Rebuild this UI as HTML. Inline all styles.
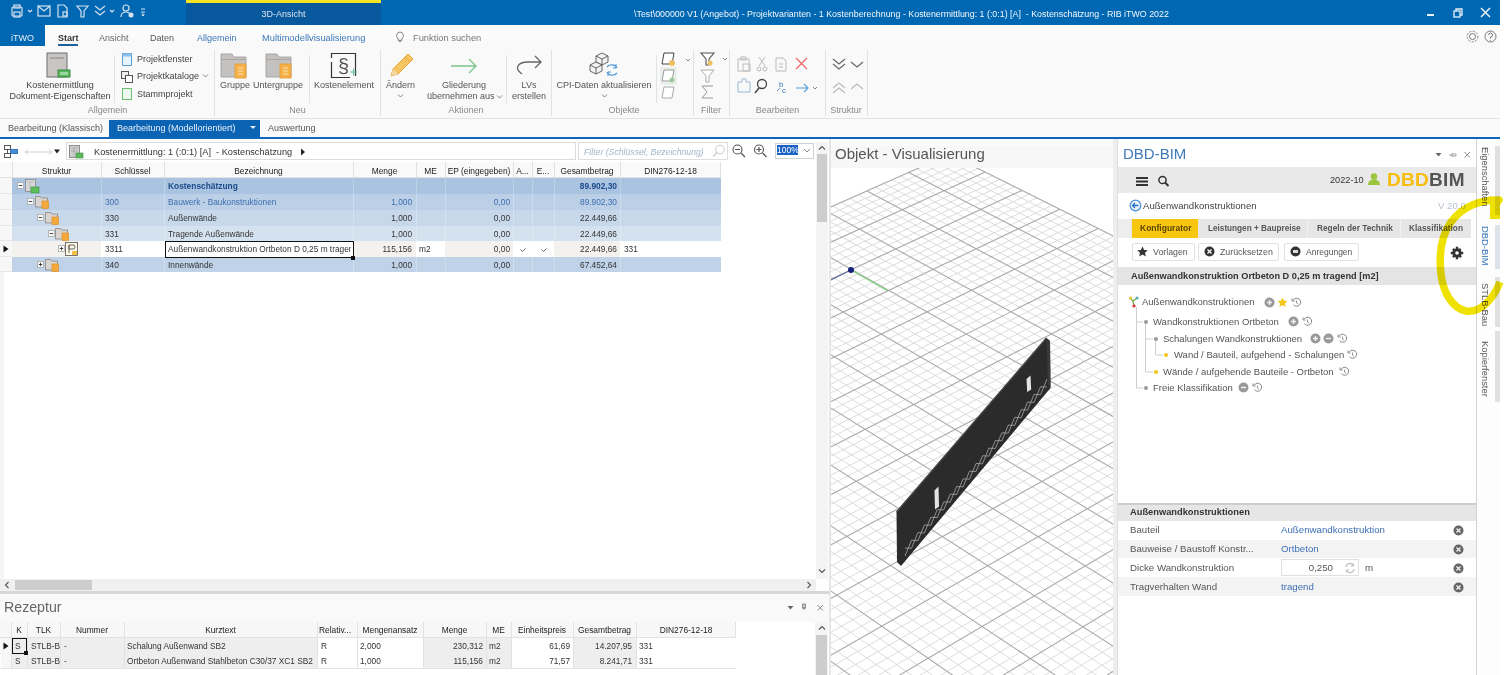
<!DOCTYPE html>
<html><head><meta charset="utf-8">
<style>
*{margin:0;padding:0;box-sizing:border-box}
html,body{width:1512px;height:675px;overflow:hidden;background:#fff;font-family:"Liberation Sans",sans-serif;color:#333}
.a{position:absolute}
.t{position:absolute;white-space:nowrap}
.c{text-align:center}
.r{text-align:right}
svg{position:absolute;overflow:visible}
</style></head><body>
<!-- TITLE BAR -->
<div class="a" style="left:0;top:0;width:1500px;height:25px;background:#0068b3"></div>
<div class="a" style="left:186px;top:0;width:195px;height:25px;background:#07589c"></div>
<div class="a" style="left:186px;top:0;width:195px;height:3px;background:#f4e422"></div>
<div class="t c" style="left:186px;top:8px;width:195px;font-size:9px;line-height:12px;color:#d9e4ee">3D-Ansicht</div>
<div class="t" style="left:634px;top:8px;font-size:8.85px;line-height:12px;color:#f2f6fa">\Test\000000 V1 (Angebot) - Projektvarianten - 1 Kostenberechnung - Kostenermittlung: 1 (:0:1) [A]&nbsp; - Kostenschätzung - RIB iTWO 2022</div>
<!-- quick access icons -->
<svg style="left:0;top:0" width="180" height="25">
 <g fill="none" stroke="#d6e2ef" stroke-width="1.2">
  <rect x="12" y="7" width="10" height="9" rx="1"/><rect x="14" y="5" width="6" height="3"/><rect x="14" y="12" width="6" height="5"/>
  <path d="M28 10 l2 2 l2 -2"/>
  <rect x="38" y="6" width="12" height="10"/><path d="M38 6 l6 5 l6 -5"/>
  <path d="M58 5 h6 l3 3 v9 h-9z"/><rect x="63" y="12" width="4" height="4"/>
  <path d="M77 6 h11 l-4 5 v6 h-3 v-6z"/>
  <path d="M95 6 l5 4 l5 -4 M95 11 l5 4 l5 -4"/><path d="M110 10 l2 2 l2 -2"/>
  <circle cx="126" cy="8" r="3"/><path d="M121 17 q0 -5 5 -5 q3 0 4 2"/>
 </g>
 <circle cx="131" cy="15" r="2.5" fill="#d6e2ef"/>
 <path d="M141 9 h4 M141 12 h4 M143 13 v3 l-1.5 -1.5 M143 16 l1.5 -1.5" stroke="#d6e2ef" stroke-width="1" fill="none"/>
</svg>
<!-- window controls -->
<div class="a" style="left:1427px;top:14px;width:7px;height:2px;background:#e8f0f8"></div>
<svg style="left:1452px;top:7px" width="14" height="12"><g fill="none" stroke="#e8f0f8" stroke-width="1.3"><rect x="2" y="4" width="6" height="6"/><path d="M4 4 v-2 h6 v6 h-2"/></g></svg>
<svg style="left:1480px;top:7px" width="12" height="12"><path d="M1 1 L10 10 M10 1 L1 10" stroke="#e8f0f8" stroke-width="1.5"/></svg>

<!-- RIBBON TABS -->
<div class="a" style="left:0;top:25px;width:1500px;height:94px;background:#f9f9f9"></div><div class="a" style="left:0;top:25px;width:1500px;height:14px;background:#fcfcfc"></div>
<div class="a" style="left:0;top:25px;width:45px;height:21px;background:#0068b3"></div>
<div class="t c" style="left:0;top:32px;width:45px;font-size:9px;line-height:12px;color:#e6eef6">iTWO</div>
<div class="t" style="left:58px;top:32px;font-size:9px;line-height:12px;color:#333;font-weight:bold">Start</div>
<div class="a" style="left:58px;top:44px;width:20px;height:2px;background:#1e5f9e"></div>
<div class="t" style="left:99px;top:32px;font-size:9px;line-height:12px;color:#666">Ansicht</div>
<div class="t" style="left:150px;top:32px;font-size:9px;line-height:12px;color:#555">Daten</div>
<div class="t" style="left:197px;top:32px;font-size:9px;line-height:12px;color:#3b78b8">Allgemein</div>
<div class="t" style="left:262px;top:32px;font-size:9.3px;line-height:12px;color:#3b78b8">Multimodellvisualisierung</div>
<svg style="left:395px;top:31px" width="10" height="12"><path d="M5 1 a3.5 3.5 0 0 1 2 6.3 v2 h-4 v-2 a3.5 3.5 0 0 1 2 -6.3z M4 10.5 h2" fill="none" stroke="#777" stroke-width="0.9"/></svg>
<div class="t" style="left:413px;top:32px;font-size:9.3px;line-height:12px;color:#777">Funktion suchen</div>
<svg style="left:1466px;top:30px" width="32" height="14"><g fill="none" stroke="#777" stroke-width="1"><circle cx="6.5" cy="6.5" r="3"/><circle cx="6.5" cy="6.5" r="5.3" stroke-dasharray="2 1.5"/><circle cx="24.5" cy="6.5" r="5.5"/><path d="M22.5 5 a2 2 0 1 1 2 2 v1.5 M24.5 10 v0.8"/></g></svg>


<!-- RIBBON BODY -->
<div class="a" style="left:0;top:118px;width:1500px;height:1px;background:#e4e4e4"></div>
<!-- group separators -->
<div class="a" style="left:114px;top:55px;width:1px;height:48px;background:#e2e2e2"></div>
<div class="a" style="left:214px;top:50px;width:1px;height:66px;background:#e2e2e2"></div>
<div class="a" style="left:309px;top:55px;width:1px;height:48px;background:#e2e2e2"></div>
<div class="a" style="left:380px;top:50px;width:1px;height:66px;background:#e2e2e2"></div>
<div class="a" style="left:506px;top:55px;width:1px;height:48px;background:#e2e2e2"></div>
<div class="a" style="left:551px;top:50px;width:1px;height:66px;background:#e2e2e2"></div>
<div class="a" style="left:656px;top:55px;width:1px;height:48px;background:#e2e2e2"></div>
<div class="a" style="left:693px;top:50px;width:1px;height:66px;background:#e2e2e2"></div>
<div class="a" style="left:729px;top:50px;width:1px;height:66px;background:#e2e2e2"></div>
<div class="a" style="left:825px;top:50px;width:1px;height:66px;background:#e2e2e2"></div>
<div class="a" style="left:867px;top:50px;width:1px;height:66px;background:#e2e2e2"></div>
<!-- Allgemein group -->
<svg style="left:46px;top:52px" width="28" height="28">
 <rect x="1" y="1" width="20" height="24" fill="#c9c5c2" stroke="#6e6e6e" stroke-width="1"/>
 <path d="M4 6 h14" stroke="#888" stroke-width="1"/>
 <rect x="12" y="18" width="12" height="7" fill="#58b85e" stroke="#3a8a40" stroke-width="1"/>
 <rect x="14" y="20" width="8" height="3" fill="#9ad49e"/>
</svg>
<div class="t c" style="left:0;top:80px;width:120px;font-size:9px;line-height:11px;color:#444">Kostenermittlung<br>Dokument-Eigenschaften</div>
<div class="t c" style="left:60px;top:105px;width:95px;font-size:9px;line-height:11px;color:#888">Allgemein</div>
<svg style="left:121px;top:52px" width="14" height="48">
 <rect x="1.5" y="1.5" width="9" height="12" fill="#e9f3fb" stroke="#5aa0d8" stroke-width="1"/><rect x="1.5" y="1.5" width="9" height="3" fill="#8cc0ea"/>
 <rect x="0.5" y="19.5" width="7" height="7" fill="#eee" stroke="#555" stroke-width="1"/><rect x="4.5" y="23.5" width="7" height="7" fill="#fff" stroke="#555" stroke-width="1"/>
 <rect x="1.5" y="36.5" width="9" height="11" fill="#eef8ee" stroke="#6cc070" stroke-width="1"/>
</svg>
<div class="t" style="left:137px;top:53px;font-size:9px;line-height:12px;color:#444">Projektfenster</div>
<div class="t" style="left:137px;top:70px;font-size:9px;line-height:12px;color:#444">Projektkataloge</div>
<svg style="left:202px;top:73px" width="8" height="6"><path d="M1 1.5 l2.5 2.5 l2.5 -2.5" fill="none" stroke="#777" stroke-width="0.9"/></svg>
<div class="t" style="left:137px;top:88px;font-size:9px;line-height:12px;color:#444">Stammprojekt</div>
<!-- Neu group -->
<svg style="left:220px;top:53px" width="30" height="26">
 <path d="M1 1 h11 l2 3 h12 v20 h-25z" fill="#c4c2c0" stroke="#9a9a9a" stroke-width="0.8"/>
 <rect x="1" y="6" width="25" height="1" fill="#a9a6a4"/>
 <rect x="15" y="11" width="11" height="14" fill="#f5b14a" stroke="#e09a2e" stroke-width="0.8"/>
 <path d="M18 15 h5 M18 18 h5 M18 21 h5" stroke="#fde2b0" stroke-width="1"/>
</svg>
<svg style="left:265px;top:53px" width="30" height="26">
 <path d="M1 1 h11 l2 3 h12 v20 h-25z" fill="#c4c2c0" stroke="#9a9a9a" stroke-width="0.8"/>
 <rect x="1" y="6" width="25" height="1" fill="#a9a6a4"/>
 <rect x="15" y="11" width="11" height="14" fill="#f5b14a" stroke="#e09a2e" stroke-width="0.8"/>
 <path d="M18 15 h5 M18 18 h5 M18 21 h5" stroke="#fde2b0" stroke-width="1"/>
</svg>
<div class="t" style="left:220px;top:80px;font-size:9px;line-height:11px;color:#555">Gruppe</div>
<div class="t" style="left:253px;top:80px;font-size:9px;line-height:11px;color:#555">Untergruppe</div>
<svg style="left:330px;top:52px" width="30" height="28">
 <path d="M1.5 6 V1.5 H25.5 V24 M20 25.5 H1.5 V10" fill="none" stroke="#333" stroke-width="1.2"/>
 <text x="13.5" y="21" font-size="20" font-family="Liberation Sans" fill="#555" text-anchor="middle">§</text>
 <path d="M20 20 h7 M23.5 16.5 v7" stroke="#5cc28e" stroke-width="1"/>
</svg>
<div class="t" style="left:314px;top:80px;font-size:9px;line-height:11px;color:#555">Kostenelement</div>
<div class="t c" style="left:250px;top:105px;width:95px;font-size:9px;line-height:11px;color:#888">Neu</div>
<!-- Aendern -->
<svg style="left:387px;top:52px" width="30" height="28">
 <path d="M4 24 l2 -7 l15 -15 l5 5 l-15 15 z" fill="#f6c461" stroke="#e8a23a" stroke-width="1"/>
 <path d="M4 24 l2 -7 l5 5z" fill="#f3d9a8"/>
 <path d="M18 5 l5 5" stroke="#e8a23a" stroke-width="1"/>
</svg>
<div class="t" style="left:386px;top:80px;font-size:9px;line-height:11px;color:#555">Ändern</div>
<svg style="left:397px;top:93px" width="8" height="6"><path d="M1 1.5 l2.5 2.5 l2.5 -2.5" fill="none" stroke="#777" stroke-width="0.9"/></svg>
<!-- Aktionen -->
<svg style="left:449px;top:57px" width="30" height="18"><path d="M2 9 h25 M20 2 l7 7 l-7 7" fill="none" stroke="#7cc48a" stroke-width="1.3"/></svg>
<div class="t c" style="left:420px;top:80px;width:88px;font-size:9px;line-height:11px;color:#555">Gliederung</div><div class="t" style="left:427px;top:91px;font-size:9px;line-height:11px;color:#555">übernehmen aus</div>
<svg style="left:496px;top:94px" width="8" height="6"><path d="M1 1.5 l2.5 2.5 l2.5 -2.5" fill="none" stroke="#777" stroke-width="0.9"/></svg>
<svg style="left:514px;top:55px" width="30" height="22"><path d="M8 19 q-6 -4 -4 -8 q2 -4 10 -4 h13 M21 1 l6 6 l-6 6" fill="none" stroke="#666" stroke-width="1.3"/></svg>
<div class="t c" style="left:508px;top:80px;width:42px;font-size:9px;line-height:11px;color:#555">LVs<br>erstellen</div>
<div class="t c" style="left:420px;top:105px;width:92px;font-size:9px;line-height:11px;color:#888">Aktionen</div>
<!-- Objekte -->
<svg style="left:590px;top:52px" width="32" height="28">
 <g fill="#f4f4f4" stroke="#555" stroke-width="0.9">
  <path d="M12 1 l6 3 v6 l-6 3 l-6 -3 v-6z"/><path d="M6 4 l6 3 l6 -3 M12 7 v6"/>
  <path d="M6 10 l6 3 v6 l-6 3 l-6 -3 v-6z"/><path d="M0 13 l6 3 l6 -3 M6 16 v6"/>
 </g>
 <path d="M17 15 a6 6 0 0 1 10 1 M27 21 a6 6 0 0 1 -10 -1" fill="none" stroke="#4a96d8" stroke-width="1.2"/>
 <path d="M26 12 v4 h-3 M18 24 v-4 h3" fill="none" stroke="#4a96d8" stroke-width="1"/>
</svg>
<div class="t c" style="left:552px;top:80px;width:104px;font-size:9px;line-height:11px;color:#555">CPI-Daten aktualisieren</div>
<svg style="left:601px;top:93px" width="8" height="6"><path d="M1 1.5 l2.5 2.5 l2.5 -2.5" fill="none" stroke="#777" stroke-width="0.9"/></svg>
<svg style="left:661px;top:51px" width="30" height="50">
 <path d="M3 2 h10 l-2 11 h-10z" fill="#fff" stroke="#444" stroke-width="1"/><circle cx="11" cy="12" r="3" fill="#f0c060"/>
 <path d="M25 8 l2 2 l2 -2" fill="none" stroke="#777" stroke-width="0.9"/>
 <rect x="0" y="17" width="15" height="16" fill="#f0f4f0" stroke="#d6e6d6" stroke-width="0.8"/>
 <path d="M3 19 h10 l-2 11 h-10z" fill="#fff" stroke="#999" stroke-width="1"/><circle cx="11" cy="29" r="2.5" fill="#9dc9a3"/>
 <path d="M3 36 h10 l-2 11 h-10z" fill="#fff" stroke="#aaa" stroke-width="1"/>
</svg>
<div class="t c" style="left:552px;top:105px;width:144px;font-size:9px;line-height:11px;color:#888">Objekte</div>
<!-- Filter -->
<svg style="left:699px;top:51px" width="30" height="50">
 <path d="M2 2 h13 l-5 6 v6 h-3 v-6z" fill="#fff" stroke="#555" stroke-width="1.1"/><circle cx="11" cy="12" r="2.5" fill="#f0c060"/>
 <path d="M24 7 l2 2 l2 -2" fill="none" stroke="#777" stroke-width="0.9"/>
 <path d="M2 19 h13 l-5 6 v6 h-3 v-6z" fill="#fff" stroke="#aaa" stroke-width="1"/>
 <path d="M14 35 h-11 l5 6 l-5 6 h11" fill="none" stroke="#999" stroke-width="1"/>
</svg>
<div class="t c" style="left:690px;top:105px;width:42px;font-size:9px;line-height:11px;color:#888">Filter</div>
<!-- Bearbeiten -->
<svg style="left:735px;top:55px" width="90" height="42">
 <g fill="none" stroke="#bbb" stroke-width="1">
  <rect x="3" y="4" width="11" height="12"/><rect x="6" y="2" width="5" height="3"/><rect x="8" y="9" width="7" height="7"/>
  <path d="M24 2 l6 9 M30 2 l-6 9"/><circle cx="24" cy="14" r="2"/><circle cx="30" cy="14" r="2"/>
  <path d="M41 3 h7 l3 3 v10 h-10z M44 9 h4 M44 12 h4"/>
 </g>
 <path d="M61 3 l11 11 M72 3 l-11 11" stroke="#e66" stroke-width="1.2"/>
 <g fill="none" stroke="#9cb8d0" stroke-width="1"><path d="M3 27 h4 v-3 h4 v3 h4 v10 h-12z"/></g>
 <circle cx="27" cy="29" r="4.5" fill="none" stroke="#444" stroke-width="1.3"/><path d="M24 33 l-4 5" stroke="#444" stroke-width="1.5"/>
 <text x="44" y="32" font-size="8" fill="#3b7cbf" font-family="Liberation Sans">b</text><text x="47" y="38" font-size="8" fill="#3b7cbf" font-family="Liberation Sans">c</text>
 <path d="M42 36 l3 -3" stroke="#3b7cbf" stroke-width="0.8"/>
 <path d="M61 33 h12 M69 29 l4 4 l-4 4" fill="none" stroke="#5a9ede" stroke-width="1.2"/>
 <path d="M78 32 l2 2 l2 -2" fill="none" stroke="#777" stroke-width="0.9"/>
</svg>
<div class="t c" style="left:730px;top:105px;width:95px;font-size:9px;line-height:11px;color:#888">Bearbeiten</div>
<!-- Struktur -->
<svg style="left:830px;top:56px" width="36" height="40">
 <path d="M3 3 l6 5 l6 -5 M3 8 l6 5 l6 -5" fill="none" stroke="#666" stroke-width="1.2"/>
 <path d="M21 6 l6 5 l6 -5" fill="none" stroke="#666" stroke-width="1.2"/>
 <path d="M3 32 l6 -5 l6 5 M3 37 l6 -5 l6 5" fill="none" stroke="#bbb" stroke-width="1.2"/>
 <path d="M21 33 l6 -5 l6 5" fill="none" stroke="#bbb" stroke-width="1.2"/>
</svg>
<div class="t c" style="left:825px;top:105px;width:42px;font-size:9px;line-height:11px;color:#888">Struktur</div>

<!-- SUBTABS -->
<div class="a" style="left:0;top:119px;width:1500px;height:18px;background:#f9f9f9"></div>
<div class="t" style="left:8px;top:123px;font-size:9px;line-height:11px;color:#555">Bearbeitung (Klassisch)</div>
<div class="a" style="left:109px;top:120px;width:151px;height:17px;background:#0b63b3"></div>
<div class="t" style="left:117px;top:123px;font-size:9px;line-height:11px;color:#e8f0f8">Bearbeitung (Modellorientiert)</div>
<svg style="left:250px;top:126px" width="6" height="4"><path d="M0 0 h6 l-3 3z" fill="#e8f0f8"/></svg>
<div class="t" style="left:268px;top:123px;font-size:9px;line-height:11px;color:#555">Auswertung</div>
<div class="a" style="left:0;top:137px;width:1500px;height:2px;background:#0d67b8"></div>

<!-- MAIN GRID -->
<svg style="left:4px;top:145px" width="60" height="14">
 <g fill="none" stroke="#555" stroke-width="1"><rect x="0.5" y="0.5" width="6" height="4"/><rect x="0.5" y="8.5" width="6" height="4"/><path d="M3.5 4.5 v4"/></g>
 <rect x="6" y="4" width="8" height="5" fill="#4a90d9"/><rect x="6.5" y="4.5" width="7" height="4" fill="none" stroke="#2f6fb5" stroke-width="0.8"/>
 <path d="M21 7 h27 M24 4.5 l-3 2.5 l3 2.5 M45 4.5 l3 2.5 l-3 2.5" fill="none" stroke="#ccc" stroke-width="0.9"/>
 <path d="M50 4.5 h6 l-3 4z" fill="#222"/>
</svg>
<div class="a" style="left:66px;top:142px;width:510px;height:18px;border:1px solid #dcdcdc;background:#fff"></div>
<svg style="left:69px;top:145px" width="16" height="14">
 <rect x="0.5" y="0.5" width="10" height="12" fill="#cfcfcf" stroke="#777" stroke-width="0.8"/><path d="M2 3 h7 M2 6 h7 M5 3 v9" stroke="#999" stroke-width="0.6"/>
 <rect x="7" y="8" width="7" height="5" fill="#5cb85c" stroke="#3f8f3f" stroke-width="0.6"/>
</svg>
<div class="t" style="left:94px;top:146px;font-size:9.2px;line-height:12px;color:#333">Kostenermittlung: 1 (:0:1) [A]&nbsp; - Kostenschätzung</div>
<svg style="left:300px;top:148px" width="6" height="8"><path d="M1 0.5 l4 3.5 l-4 3.5z" fill="#222"/></svg>
<div class="a" style="left:578px;top:142px;width:150px;height:18px;border:1px solid #dedede;background:#fff"></div>
<div class="t" style="left:584px;top:146px;font-size:8.7px;line-height:12px;color:#a4b6cb;font-style:italic">Filter (Schlüssel, Bezeichnung)</div>
<svg style="left:712px;top:144px" width="14" height="14"><circle cx="8" cy="5.5" r="4.3" fill="none" stroke="#c9c9c9" stroke-width="1"/><path d="M5 8.5 l-4 4" stroke="#c9c9c9" stroke-width="1.2"/></svg>
<svg style="left:732px;top:144px" width="40" height="16">
 <circle cx="5.5" cy="5.5" r="4.5" fill="none" stroke="#555" stroke-width="1.1"/><path d="M3 5.5 h5 M9 9 l4 4" stroke="#555" stroke-width="1.2"/>
 <circle cx="27" cy="5.5" r="4.5" fill="none" stroke="#555" stroke-width="1.1"/><path d="M24.5 5.5 h5 M27 3 v5 M30.5 9 l4 4" stroke="#555" stroke-width="1.2"/>
</svg>
<div class="a" style="left:775px;top:143px;width:39px;height:16px;border:1px solid #d0d0d0;background:#fff"></div>
<div class="a" style="left:777px;top:145px;width:21px;height:10px;background:#1b62c4"></div>
<div class="t" style="left:777px;top:144px;font-size:8.5px;line-height:12px;color:#fff">100%</div>
<svg style="left:803px;top:148px" width="8" height="6"><path d="M1 1 l3 3 l3 -3" fill="none" stroke="#888" stroke-width="1"/></svg>

<div class="a" style="left:0;top:162px;width:721px;height:16px;background:#f9f9f9;border-bottom:1px solid #e2e2e2"></div>
<div class="a" style="left:12px;top:162px;width:1px;height:16px;background:#e0e0e0"></div>
<div class="t c" style="left:12px;top:164.5px;width:89px;font-size:8.4px;line-height:12px;color:#222">Struktur</div>
<div class="a" style="left:101px;top:162px;width:1px;height:16px;background:#e0e0e0"></div>
<div class="t c" style="left:101px;top:164.5px;width:63px;font-size:8.4px;line-height:12px;color:#222">Schlüssel</div>
<div class="a" style="left:164px;top:162px;width:1px;height:16px;background:#e0e0e0"></div>
<div class="t c" style="left:164px;top:164.5px;width:189px;font-size:8.4px;line-height:12px;color:#222">Bezeichnung</div>
<div class="a" style="left:353px;top:162px;width:1px;height:16px;background:#e0e0e0"></div>
<div class="t c" style="left:353px;top:164.5px;width:63px;font-size:8.4px;line-height:12px;color:#222">Menge</div>
<div class="a" style="left:416px;top:162px;width:1px;height:16px;background:#e0e0e0"></div>
<div class="t c" style="left:416px;top:164.5px;width:29px;font-size:8.4px;line-height:12px;color:#222">ME</div>
<div class="a" style="left:445px;top:162px;width:1px;height:16px;background:#e0e0e0"></div>
<div class="t c" style="left:445px;top:164.5px;width:68px;font-size:8.4px;line-height:12px;color:#222">EP (eingegeben)</div>
<div class="a" style="left:513px;top:162px;width:1px;height:16px;background:#e0e0e0"></div>
<div class="t c" style="left:513px;top:164.5px;width:19px;font-size:8.4px;line-height:12px;color:#222">A...</div>
<div class="a" style="left:532px;top:162px;width:1px;height:16px;background:#e0e0e0"></div>
<div class="t c" style="left:532px;top:164.5px;width:22px;font-size:8.4px;line-height:12px;color:#222">E...</div>
<div class="a" style="left:554px;top:162px;width:1px;height:16px;background:#e0e0e0"></div>
<div class="t c" style="left:554px;top:164.5px;width:66px;font-size:8.4px;line-height:12px;color:#222">Gesamtbetrag</div>
<div class="a" style="left:620px;top:162px;width:1px;height:16px;background:#e0e0e0"></div>
<div class="t c" style="left:620px;top:164.5px;width:101px;font-size:8.4px;line-height:12px;color:#222">DIN276-12-18</div>
<div class="a" style="left:720px;top:162px;width:1px;height:16px;background:#e0e0e0"></div>
<div class="a" style="left:0;top:178px;width:12px;height:16px;background:#f7f7f7;border-bottom:1px solid #e8e8e8"></div>
<div class="a" style="left:12px;top:178px;width:709px;height:16px;background:#a9c3e0"></div>
<div class="a" style="left:101px;top:178px;width:1px;height:16px;background:rgba(255,255,255,0.25)"></div>
<div class="a" style="left:164px;top:178px;width:1px;height:16px;background:rgba(255,255,255,0.25)"></div>
<div class="a" style="left:353px;top:178px;width:1px;height:16px;background:rgba(255,255,255,0.25)"></div>
<div class="a" style="left:416px;top:178px;width:1px;height:16px;background:rgba(255,255,255,0.25)"></div>
<div class="a" style="left:445px;top:178px;width:1px;height:16px;background:rgba(255,255,255,0.25)"></div>
<div class="a" style="left:513px;top:178px;width:1px;height:16px;background:rgba(255,255,255,0.25)"></div>
<div class="a" style="left:532px;top:178px;width:1px;height:16px;background:rgba(255,255,255,0.25)"></div>
<div class="a" style="left:554px;top:178px;width:1px;height:16px;background:rgba(255,255,255,0.25)"></div>
<div class="a" style="left:620px;top:178px;width:1px;height:16px;background:rgba(255,255,255,0.25)"></div>
<div class="a" style="left:0;top:194px;width:12px;height:16px;background:#f7f7f7;border-bottom:1px solid #e8e8e8"></div>
<div class="a" style="left:12px;top:194px;width:709px;height:16px;background:#bbcfe6"></div>
<div class="a" style="left:101px;top:194px;width:1px;height:16px;background:rgba(255,255,255,0.25)"></div>
<div class="a" style="left:164px;top:194px;width:1px;height:16px;background:rgba(255,255,255,0.25)"></div>
<div class="a" style="left:353px;top:194px;width:1px;height:16px;background:rgba(255,255,255,0.25)"></div>
<div class="a" style="left:416px;top:194px;width:1px;height:16px;background:rgba(255,255,255,0.25)"></div>
<div class="a" style="left:445px;top:194px;width:1px;height:16px;background:rgba(255,255,255,0.25)"></div>
<div class="a" style="left:513px;top:194px;width:1px;height:16px;background:rgba(255,255,255,0.25)"></div>
<div class="a" style="left:532px;top:194px;width:1px;height:16px;background:rgba(255,255,255,0.25)"></div>
<div class="a" style="left:554px;top:194px;width:1px;height:16px;background:rgba(255,255,255,0.25)"></div>
<div class="a" style="left:620px;top:194px;width:1px;height:16px;background:rgba(255,255,255,0.25)"></div>
<div class="a" style="left:0;top:210px;width:12px;height:16px;background:#f7f7f7;border-bottom:1px solid #e8e8e8"></div>
<div class="a" style="left:12px;top:210px;width:709px;height:16px;background:#c7d8eb"></div>
<div class="a" style="left:101px;top:210px;width:1px;height:16px;background:rgba(255,255,255,0.25)"></div>
<div class="a" style="left:164px;top:210px;width:1px;height:16px;background:rgba(255,255,255,0.25)"></div>
<div class="a" style="left:353px;top:210px;width:1px;height:16px;background:rgba(255,255,255,0.25)"></div>
<div class="a" style="left:416px;top:210px;width:1px;height:16px;background:rgba(255,255,255,0.25)"></div>
<div class="a" style="left:445px;top:210px;width:1px;height:16px;background:rgba(255,255,255,0.25)"></div>
<div class="a" style="left:513px;top:210px;width:1px;height:16px;background:rgba(255,255,255,0.25)"></div>
<div class="a" style="left:532px;top:210px;width:1px;height:16px;background:rgba(255,255,255,0.25)"></div>
<div class="a" style="left:554px;top:210px;width:1px;height:16px;background:rgba(255,255,255,0.25)"></div>
<div class="a" style="left:620px;top:210px;width:1px;height:16px;background:rgba(255,255,255,0.25)"></div>
<div class="a" style="left:0;top:226px;width:12px;height:15px;background:#f7f7f7;border-bottom:1px solid #e8e8e8"></div>
<div class="a" style="left:12px;top:226px;width:709px;height:15px;background:#d4e2f0"></div>
<div class="a" style="left:101px;top:226px;width:1px;height:15px;background:rgba(255,255,255,0.25)"></div>
<div class="a" style="left:164px;top:226px;width:1px;height:15px;background:rgba(255,255,255,0.25)"></div>
<div class="a" style="left:353px;top:226px;width:1px;height:15px;background:rgba(255,255,255,0.25)"></div>
<div class="a" style="left:416px;top:226px;width:1px;height:15px;background:rgba(255,255,255,0.25)"></div>
<div class="a" style="left:445px;top:226px;width:1px;height:15px;background:rgba(255,255,255,0.25)"></div>
<div class="a" style="left:513px;top:226px;width:1px;height:15px;background:rgba(255,255,255,0.25)"></div>
<div class="a" style="left:532px;top:226px;width:1px;height:15px;background:rgba(255,255,255,0.25)"></div>
<div class="a" style="left:554px;top:226px;width:1px;height:15px;background:rgba(255,255,255,0.25)"></div>
<div class="a" style="left:620px;top:226px;width:1px;height:15px;background:rgba(255,255,255,0.25)"></div>
<div class="a" style="left:0;top:241px;width:12px;height:16px;background:#f7f7f7;border-bottom:1px solid #e8e8e8"></div>
<div class="a" style="left:0;top:257px;width:12px;height:15px;background:#f7f7f7;border-bottom:1px solid #e8e8e8"></div>
<div class="a" style="left:12px;top:257px;width:709px;height:15px;background:#bfd2e8"></div>
<div class="a" style="left:101px;top:257px;width:1px;height:15px;background:rgba(255,255,255,0.25)"></div>
<div class="a" style="left:164px;top:257px;width:1px;height:15px;background:rgba(255,255,255,0.25)"></div>
<div class="a" style="left:353px;top:257px;width:1px;height:15px;background:rgba(255,255,255,0.25)"></div>
<div class="a" style="left:416px;top:257px;width:1px;height:15px;background:rgba(255,255,255,0.25)"></div>
<div class="a" style="left:445px;top:257px;width:1px;height:15px;background:rgba(255,255,255,0.25)"></div>
<div class="a" style="left:513px;top:257px;width:1px;height:15px;background:rgba(255,255,255,0.25)"></div>
<div class="a" style="left:532px;top:257px;width:1px;height:15px;background:rgba(255,255,255,0.25)"></div>
<div class="a" style="left:554px;top:257px;width:1px;height:15px;background:rgba(255,255,255,0.25)"></div>
<div class="a" style="left:620px;top:257px;width:1px;height:15px;background:rgba(255,255,255,0.25)"></div>
<div class="a" style="left:12px;top:241px;width:89px;height:16px;background:#f4f2ef"></div>
<div class="a" style="left:101px;top:241px;width:63px;height:16px;background:#fff"></div>
<div class="a" style="left:164px;top:241px;width:189px;height:16px;background:#fff"></div>
<div class="a" style="left:353px;top:241px;width:63px;height:16px;background:#f4f2ef"></div>
<div class="a" style="left:416px;top:241px;width:29px;height:16px;background:#fff"></div>
<div class="a" style="left:445px;top:241px;width:68px;height:16px;background:#f4f2ef"></div>
<div class="a" style="left:513px;top:241px;width:19px;height:16px;background:#fff"></div>
<div class="a" style="left:532px;top:241px;width:22px;height:16px;background:#fff"></div>
<div class="a" style="left:554px;top:241px;width:66px;height:16px;background:#f4f2ef"></div>
<div class="a" style="left:620px;top:241px;width:101px;height:16px;background:#fff"></div>
<div class="a" style="left:165px;top:241px;width:189px;height:17px;border:1.6px solid #111"></div>
<div class="a" style="left:351px;top:256px;width:4px;height:4px;background:#111"></div>
<svg style="left:3px;top:245px" width="6" height="8"><path d="M0.5 0.5 l5 3.5 l-5 3.5z" fill="#111"/></svg>
<svg style="left:17px;top:182px" width="7" height="7"><rect x="0.5" y="0.5" width="6" height="6" fill="#fafafa" stroke="#aaa" stroke-width="0.8"/><path d="M1.8 3.5 h3.4" stroke="#333" stroke-width="0.9"/></svg>
<svg style="left:25px;top:179px" width="15" height="15"><rect x="0.5" y="0.5" width="10" height="12" fill="#d7d7d7" stroke="#888" stroke-width="0.8"/><path d="M2 3 h7 M5 3 v9" stroke="#aaa" stroke-width="0.6"/><rect x="6" y="8" width="8" height="6" fill="#5cbf5c" stroke="#3f8f3f" stroke-width="0.6"/></svg>
<svg style="left:27px;top:198px" width="7" height="7"><rect x="0.5" y="0.5" width="6" height="6" fill="#fafafa" stroke="#aaa" stroke-width="0.8"/><path d="M1.8 3.5 h3.4" stroke="#333" stroke-width="0.9"/></svg>
<svg style="left:35px;top:195px" width="15" height="14"><path d="M0.5 1.5 h5 l1 1.5 h6 v9 h-12z" fill="#d9d4cf" stroke="#8a8580" stroke-width="0.8"/><rect x="7" y="6" width="6.5" height="7.5" fill="#f5a93c" stroke="#d98a1c" stroke-width="0.6"/></svg>
<svg style="left:37px;top:214px" width="7" height="7"><rect x="0.5" y="0.5" width="6" height="6" fill="#fafafa" stroke="#aaa" stroke-width="0.8"/><path d="M1.8 3.5 h3.4" stroke="#333" stroke-width="0.9"/></svg>
<svg style="left:45px;top:211px" width="15" height="14"><path d="M0.5 1.5 h5 l1 1.5 h6 v9 h-12z" fill="#d9d4cf" stroke="#8a8580" stroke-width="0.8"/><rect x="7" y="6" width="6.5" height="7.5" fill="#f5a93c" stroke="#d98a1c" stroke-width="0.6"/></svg>
<svg style="left:48px;top:230px" width="7" height="7"><rect x="0.5" y="0.5" width="6" height="6" fill="#fafafa" stroke="#aaa" stroke-width="0.8"/><path d="M1.8 3.5 h3.4" stroke="#333" stroke-width="0.9"/></svg>
<svg style="left:55px;top:227px" width="15" height="14"><path d="M0.5 1.5 h5 l1 1.5 h6 v9 h-12z" fill="#d9d4cf" stroke="#8a8580" stroke-width="0.8"/><rect x="7" y="6" width="6.5" height="7.5" fill="#f5a93c" stroke="#d98a1c" stroke-width="0.6"/></svg>
<svg style="left:58px;top:245px" width="7" height="7"><rect x="0.5" y="0.5" width="6" height="6" fill="#fafafa" stroke="#aaa" stroke-width="0.8"/><path d="M1.8 3.5 h3.4 M3.5 1.8 v3.4" stroke="#333" stroke-width="0.9"/></svg>
<svg style="left:65px;top:242px" width="14" height="15"><rect x="0.5" y="0.5" width="12" height="13" fill="#fff8e6" stroke="#555" stroke-width="0.8"/><path d="M4 3 h4 q2 0 2 2 q0 2 -2 2 h-4 z M4 3 v8" fill="none" stroke="#555" stroke-width="0.9"/><rect x="7" y="9" width="5" height="4" fill="#f5c04a"/></svg>
<svg style="left:37px;top:261px" width="7" height="7"><rect x="0.5" y="0.5" width="6" height="6" fill="#fafafa" stroke="#aaa" stroke-width="0.8"/><path d="M1.8 3.5 h3.4 M3.5 1.8 v3.4" stroke="#333" stroke-width="0.9"/></svg>
<svg style="left:45px;top:258px" width="15" height="14"><path d="M0.5 1.5 h5 l1 1.5 h6 v9 h-12z" fill="#d9d4cf" stroke="#8a8580" stroke-width="0.8"/><rect x="7" y="6" width="6.5" height="7.5" fill="#f5a93c" stroke="#d98a1c" stroke-width="0.6"/></svg>
<div class="t" style="left:168px;top:180px;font-size:8.4px;line-height:12px;color:#1d4a8a;font-weight:bold;">Kostenschätzung</div>
<div class="t r" style="left:557px;width:60px;top:180px;font-size:8.4px;line-height:12px;color:#1d4a8a;font-weight:bold;">89.902,30</div>
<div class="t" style="left:105px;top:196px;font-size:8.3px;line-height:12px;color:#3d6eb0;">300</div>
<div class="t" style="left:168px;top:196px;font-size:8.3px;line-height:12px;color:#3d6eb0;">Bauwerk - Baukonstruktionen</div>
<div class="t r" style="left:357px;width:55px;top:196px;font-size:8.3px;line-height:12px;color:#3d6eb0;">1,000</div>
<div class="t r" style="left:450px;width:60px;top:196px;font-size:8.3px;line-height:12px;color:#3d6eb0;">0,00</div>
<div class="t r" style="left:557px;width:60px;top:196px;font-size:8.3px;line-height:12px;color:#3d6eb0;">89.902,30</div>
<div class="t" style="left:105px;top:212px;font-size:8.3px;line-height:12px;color:#333;">330</div>
<div class="t" style="left:168px;top:212px;font-size:8.3px;line-height:12px;color:#333;">Außenwände</div>
<div class="t r" style="left:357px;width:55px;top:212px;font-size:8.3px;line-height:12px;color:#333;">1,000</div>
<div class="t r" style="left:450px;width:60px;top:212px;font-size:8.3px;line-height:12px;color:#333;">0,00</div>
<div class="t r" style="left:557px;width:60px;top:212px;font-size:8.3px;line-height:12px;color:#333;">22.449,66</div>
<div class="t" style="left:105px;top:228px;font-size:8.3px;line-height:12px;color:#333;">331</div>
<div class="t" style="left:168px;top:228px;font-size:8.3px;line-height:12px;color:#333;">Tragende Außenwände</div>
<div class="t r" style="left:357px;width:55px;top:228px;font-size:8.3px;line-height:12px;color:#333;">1,000</div>
<div class="t r" style="left:450px;width:60px;top:228px;font-size:8.3px;line-height:12px;color:#333;">0,00</div>
<div class="t r" style="left:557px;width:60px;top:228px;font-size:8.3px;line-height:12px;color:#333;">22.449,66</div>
<div class="t" style="left:105px;top:243px;font-size:8.3px;line-height:12px;color:#333;">3311</div>
<div class="t" style="left:168px;top:243px;font-size:8.3px;line-height:12px;color:#333;"><span style="display:inline-block;width:183px;overflow:hidden">Außenwandkonstruktion Ortbeton D 0,25 m tragend</span></div>
<div class="t r" style="left:357px;width:55px;top:243px;font-size:8.3px;line-height:12px;color:#333;">115,156</div>
<div class="t" style="left:419px;top:243px;font-size:8.3px;line-height:12px;color:#333;">m2</div>
<div class="t r" style="left:450px;width:60px;top:243px;font-size:8.3px;line-height:12px;color:#333;">0,00</div>
<div class="t r" style="left:557px;width:60px;top:243px;font-size:8.3px;line-height:12px;color:#333;">22.449,66</div>
<div class="t" style="left:624px;top:243px;font-size:8.3px;line-height:12px;color:#333;">331</div>
<div class="t" style="left:105px;top:259px;font-size:8.3px;line-height:12px;color:#333;">340</div>
<div class="t" style="left:168px;top:259px;font-size:8.3px;line-height:12px;color:#333;">Innenwände</div>
<div class="t r" style="left:357px;width:55px;top:259px;font-size:8.3px;line-height:12px;color:#333;">1,000</div>
<div class="t r" style="left:450px;width:60px;top:259px;font-size:8.3px;line-height:12px;color:#333;">0,00</div>
<div class="t r" style="left:557px;width:60px;top:259px;font-size:8.3px;line-height:12px;color:#333;">67.452,64</div>
<svg style="left:520px;top:247px" width="30" height="6"><path d="M0.5 2.5 l2 2 l3 -3 M21.5 2.5 l2 2 l3 -3" fill="none" stroke="#555" stroke-width="0.9"/></svg>
<div class="a" style="left:816px;top:142px;width:12px;height:437px;background:#f4f4f4"></div>
<div class="a" style="left:817px;top:154px;width:10px;height:68px;background:#cdcdcd"></div>
<svg style="left:818px;top:145px" width="8" height="6"><path d="M1 4.5 l3 -3 l3 3" fill="none" stroke="#555" stroke-width="1.1"/></svg>
<svg style="left:818px;top:568px" width="8" height="6"><path d="M1 1.5 l3 3 l3 -3" fill="none" stroke="#555" stroke-width="1.1"/></svg>
<div class="a" style="left:0;top:579px;width:816px;height:12px;background:#f0f0f0"></div>
<div class="a" style="left:15px;top:580px;width:77px;height:10px;background:#cdcdcd"></div>
<svg style="left:4px;top:581px" width="6" height="8"><path d="M4.5 1 l-3 3 l3 3" fill="none" stroke="#555" stroke-width="1.1"/></svg>
<svg style="left:806px;top:581px" width="6" height="8"><path d="M1.5 1 l3 3 l-3 3" fill="none" stroke="#555" stroke-width="1.1"/></svg>
<div class="a" style="left:0;top:591px;width:830px;height:3px;background:#d8d8d8"></div>
<div class="a" style="left:829px;top:139px;width:2px;height:536px;background:#e6e6e6"></div>

<div class="a" style="left:0;top:272px;width:4px;height:307px;background:#f4f4f4"></div>
<!-- REZEPTUR -->
<div class="a" style="left:0;top:594px;width:829px;height:28px;background:#f9f9f9"></div>
<div class="t" style="left:4px;top:599px;font-size:14.2px;line-height:17px;color:#666">Rezeptur</div>
<svg style="left:786px;top:603px" width="40" height="10"><path d="M1.5 3 h6 l-3 3.5z" fill="#666"/><path d="M18 1 v6 M16.5 1 h3 v4 h-3z M16 5 h4" fill="none" stroke="#888" stroke-width="0.9"/><path d="M31.5 2 l5.5 5.5 M37 2 l-5.5 5.5" stroke="#888" stroke-width="1"/></svg>
<div class="a" style="left:0;top:622px;width:736px;height:16px;background:#f7f7f7"></div>
<div class="a" style="left:11px;top:622px;width:1px;height:47px;background:#e2e2e2"></div>
<div class="t c" style="left:11px;top:624px;width:16px;font-size:8.4px;line-height:12px;color:#222">K</div>
<div class="a" style="left:27px;top:622px;width:1px;height:47px;background:#e2e2e2"></div>
<div class="t c" style="left:27px;top:624px;width:33px;font-size:8.4px;line-height:12px;color:#222">TLK</div>
<div class="a" style="left:60px;top:622px;width:1px;height:47px;background:#e2e2e2"></div>
<div class="t c" style="left:60px;top:624px;width:64px;font-size:8.4px;line-height:12px;color:#222">Nummer</div>
<div class="a" style="left:124px;top:622px;width:1px;height:47px;background:#e2e2e2"></div>
<div class="t c" style="left:124px;top:624px;width:193px;font-size:8.4px;line-height:12px;color:#222">Kurztext</div>
<div class="a" style="left:317px;top:622px;width:1px;height:47px;background:#e2e2e2"></div>
<div class="t" style="left:319px;top:624px;font-size:8.4px;line-height:12px;color:#222">Relativ...</div>
<div class="a" style="left:357px;top:622px;width:1px;height:47px;background:#e2e2e2"></div>
<div class="t c" style="left:357px;top:624px;width:66px;font-size:8.4px;line-height:12px;color:#222">Mengenansatz</div>
<div class="a" style="left:423px;top:622px;width:1px;height:47px;background:#e2e2e2"></div>
<div class="t c" style="left:423px;top:624px;width:63px;font-size:8.4px;line-height:12px;color:#222">Menge</div>
<div class="a" style="left:486px;top:622px;width:1px;height:47px;background:#e2e2e2"></div>
<div class="t c" style="left:486px;top:624px;width:25px;font-size:8.4px;line-height:12px;color:#222">ME</div>
<div class="a" style="left:511px;top:622px;width:1px;height:47px;background:#e2e2e2"></div>
<div class="t c" style="left:511px;top:624px;width:62px;font-size:8.4px;line-height:12px;color:#222">Einheitspreis</div>
<div class="a" style="left:573px;top:622px;width:1px;height:47px;background:#e2e2e2"></div>
<div class="t c" style="left:573px;top:624px;width:63px;font-size:8.4px;line-height:12px;color:#222">Gesamtbetrag</div>
<div class="a" style="left:636px;top:622px;width:1px;height:47px;background:#e2e2e2"></div>
<div class="t c" style="left:636px;top:624px;width:100px;font-size:8.4px;line-height:12px;color:#222">DIN276-12-18</div>
<div class="a" style="left:735px;top:622px;width:1px;height:47px;background:#e2e2e2"></div>
<div class="a" style="left:1px;top:638px;width:10px;height:15px;background:#f7f7f7"></div>
<div class="a" style="left:12px;top:638px;width:15px;height:15px;background:#eeeeee"></div>
<div class="a" style="left:28px;top:638px;width:32px;height:15px;background:#eeeeee"></div>
<div class="a" style="left:61px;top:638px;width:63px;height:15px;background:#eeeeee"></div>
<div class="a" style="left:125px;top:638px;width:192px;height:15px;background:#eeeeee"></div>
<div class="a" style="left:318px;top:638px;width:39px;height:15px;background:#fff"></div>
<div class="a" style="left:358px;top:638px;width:65px;height:15px;background:#fff"></div>
<div class="a" style="left:424px;top:638px;width:62px;height:15px;background:#eeeeee"></div>
<div class="a" style="left:487px;top:638px;width:24px;height:15px;background:#eeeeee"></div>
<div class="a" style="left:512px;top:638px;width:61px;height:15px;background:#fff"></div>
<div class="a" style="left:574px;top:638px;width:62px;height:15px;background:#eeeeee"></div>
<div class="a" style="left:637px;top:638px;width:99px;height:15px;background:#fff"></div>
<div class="a" style="left:0;top:653px;width:736px;height:1px;background:#e2e2e2"></div>
<div class="a" style="left:1px;top:653px;width:10px;height:15px;background:#f7f7f7"></div>
<div class="a" style="left:12px;top:653px;width:15px;height:15px;background:#eeeeee"></div>
<div class="a" style="left:28px;top:653px;width:32px;height:15px;background:#eeeeee"></div>
<div class="a" style="left:61px;top:653px;width:63px;height:15px;background:#eeeeee"></div>
<div class="a" style="left:125px;top:653px;width:192px;height:15px;background:#eeeeee"></div>
<div class="a" style="left:318px;top:653px;width:39px;height:15px;background:#fff"></div>
<div class="a" style="left:358px;top:653px;width:65px;height:15px;background:#fff"></div>
<div class="a" style="left:424px;top:653px;width:62px;height:15px;background:#eeeeee"></div>
<div class="a" style="left:487px;top:653px;width:24px;height:15px;background:#eeeeee"></div>
<div class="a" style="left:512px;top:653px;width:61px;height:15px;background:#fff"></div>
<div class="a" style="left:574px;top:653px;width:62px;height:15px;background:#eeeeee"></div>
<div class="a" style="left:637px;top:653px;width:99px;height:15px;background:#fff"></div>
<div class="a" style="left:0;top:668px;width:736px;height:1px;background:#e2e2e2"></div>
<div class="a" style="left:0;top:637px;width:736px;height:1px;background:#e2e2e2"></div>
<div class="t" style="left:15px;top:640px;font-size:8.3px;line-height:12px;color:#333;">S</div>
<div class="t" style="left:31px;top:640px;font-size:8.3px;line-height:12px;color:#333;">STLB-B</div>
<div class="t" style="left:64px;top:640px;font-size:8.3px;line-height:12px;color:#333;">-</div>
<div class="t" style="left:127px;top:640px;font-size:8.3px;line-height:12px;color:#333;">Schalung Außenwand SB2</div>
<div class="t" style="left:321px;top:640px;font-size:8.3px;line-height:12px;color:#333;">R</div>
<div class="t" style="left:360px;top:640px;font-size:8.3px;line-height:12px;color:#333;">2,000</div>
<div class="t r" style="left:428px;width:55px;top:640px;font-size:8.3px;line-height:12px;color:#333;">230,312</div>
<div class="t" style="left:489px;top:640px;font-size:8.3px;line-height:12px;color:#333;">m2</div>
<div class="t r" style="left:515px;width:55px;top:640px;font-size:8.3px;line-height:12px;color:#333;">61,69</div>
<div class="t r" style="left:577px;width:55px;top:640px;font-size:8.3px;line-height:12px;color:#333;">14.207,95</div>
<div class="t" style="left:639px;top:640px;font-size:8.3px;line-height:12px;color:#333;">331</div>
<div class="t" style="left:15px;top:655px;font-size:8.3px;line-height:12px;color:#333;">S</div>
<div class="t" style="left:31px;top:655px;font-size:8.3px;line-height:12px;color:#333;">STLB-B</div>
<div class="t" style="left:64px;top:655px;font-size:8.3px;line-height:12px;color:#333;">-</div>
<div class="t" style="left:127px;top:655px;font-size:8.3px;line-height:12px;color:#333;">Ortbeton Außenwand Stahlbeton C30/37 XC1 SB2</div>
<div class="t" style="left:321px;top:655px;font-size:8.3px;line-height:12px;color:#333;">R</div>
<div class="t" style="left:360px;top:655px;font-size:8.3px;line-height:12px;color:#333;">1,000</div>
<div class="t r" style="left:428px;width:55px;top:655px;font-size:8.3px;line-height:12px;color:#333;">115,156</div>
<div class="t" style="left:489px;top:655px;font-size:8.3px;line-height:12px;color:#333;">m2</div>
<div class="t r" style="left:515px;width:55px;top:655px;font-size:8.3px;line-height:12px;color:#333;">71,57</div>
<div class="t r" style="left:577px;width:55px;top:655px;font-size:8.3px;line-height:12px;color:#333;">8.241,71</div>
<div class="t" style="left:639px;top:655px;font-size:8.3px;line-height:12px;color:#333;">331</div>
<div class="a" style="left:12px;top:638px;width:15px;height:16px;border:1.6px solid #111"></div>
<div class="a" style="left:24px;top:651px;width:4px;height:4px;background:#111"></div>
<svg style="left:3px;top:642px" width="6" height="8"><path d="M0.5 0.5 l5 3.5 l-5 3.5z" fill="#111"/></svg>
<div class="a" style="left:815px;top:622px;width:13px;height:53px;background:#f4f4f4"></div>
<div class="a" style="left:816px;top:635px;width:11px;height:40px;background:#cdcdcd"></div>
<svg style="left:818px;top:625px" width="8" height="6"><path d="M1 4.5 l3 -3 l3 3" fill="none" stroke="#555" stroke-width="1.1"/></svg>
<!-- 3D VIEW -->
<div class="a" style="left:831px;top:139px;width:282px;height:29px;background:#f7f7f7"></div><div class="a" style="left:831px;top:139px;width:282px;height:7px;background:#fbfbfb"></div>
<div class="t" style="left:835px;top:145px;font-size:15px;line-height:18px;color:#555">Objekt - Visualisierung</div>
<svg style="left:0;top:0" width="1512" height="675">
<defs><clipPath id="vc"><rect x="831" y="168" width="282" height="507"/></clipPath></defs>
<g clip-path="url(#vc)">
<path d="M159.9 513.1L956.7 157.8 M166.1 518.6L963.8 161.4 M172.3 524.2L970.9 164.9 M178.6 529.8L978.1 168.5 M191.3 541.1L992.6 175.7 M197.7 546.8L999.9 179.4 M204.2 552.5L1007.2 183.0 M210.7 558.3L1014.5 186.7 M223.8 570.0L1029.4 194.1 M230.4 575.9L1036.9 197.9 M237.1 581.8L1044.4 201.6 M243.8 587.8L1052.0 205.4 M257.4 599.8L1067.2 213.0 M264.2 605.9L1074.9 216.9 M271.1 612.1L1082.6 220.7 M278.1 618.3L1090.4 224.6 M292.1 630.7L1106.0 232.5 M299.2 637.0L1113.9 236.4 M306.3 643.4L1121.9 240.4 M313.5 649.8L1129.9 244.4 M328.0 662.7L1146.0 252.4 M335.4 669.2L1154.1 256.5 M342.8 675.8L1162.2 260.5 M350.2 682.4L1170.5 264.6 M365.2 695.8L1187.0 272.9 M372.8 702.6L1195.4 277.1 M380.5 709.4L1203.8 281.3 M388.2 716.2L1212.2 285.5 M403.8 730.1L1229.2 294.0 M411.7 737.1L1237.8 298.3 M419.6 744.2L1246.5 302.6 M427.6 751.3L1255.1 307.0 M443.7 765.6L1272.7 315.7 M451.9 772.9L1281.5 320.2 M460.1 780.2L1290.4 324.6 M468.4 787.6L1299.3 329.1 M485.2 802.5L1317.4 338.1 M493.7 810.1L1326.5 342.6 M502.2 817.7L1335.6 347.2 M510.8 825.3L1344.8 351.8 M528.2 840.8L1363.4 361.1 M537.0 848.6L1372.8 365.8 M545.9 856.5L1382.2 370.5 M554.8 864.5L1391.7 375.2 M572.9 880.6L1410.9 384.8 M582.1 888.7L1420.5 389.6 M591.3 896.9L1430.2 394.5 M600.6 905.2L1440.0 399.4 M619.4 921.9L1459.7 409.2 M628.9 930.4L1469.7 414.2 M638.5 938.9L1479.7 419.2 M648.2 947.5L1489.8 424.3 M667.8 964.9L1510.2 434.4 M677.7 973.8L1520.4 439.6 M687.7 982.6L1530.8 444.8 M697.7 991.6L1541.2 449.9 M718.1 1009.7L1562.2 460.4 M728.4 1018.9L1572.8 465.7 M738.8 1028.2L1583.5 471.1 M749.3 1037.5L1594.2 476.4 M770.6 1056.4L1615.9 487.3 M781.3 1066.0L1626.8 492.8 M792.2 1075.6L1637.8 498.3 M803.1 1085.4L1648.9 503.8 M166.0 502.2L828.0 1085.6 M178.1 496.8L841.7 1076.1 M190.2 491.4L855.4 1066.7 M202.2 486.1L868.9 1057.3 M226.1 475.5L895.6 1038.8 M237.9 470.2L908.8 1029.7 M249.7 465.0L921.9 1020.6 M261.3 459.8L934.9 1011.6 M284.5 449.5L960.7 993.8 M296.0 444.4L973.4 985.0 M307.4 439.4L986.0 976.2 M318.8 434.3L998.5 967.5 M341.3 424.3L1023.3 950.4 M352.5 419.4L1035.6 941.9 M363.6 414.4L1047.7 933.5 M374.7 409.5L1059.8 925.1 M396.6 399.8L1083.7 908.6 M407.4 395.0L1095.5 900.4 M418.2 390.2L1107.2 892.3 M429.0 385.4L1118.9 884.2 M450.3 376.0L1141.9 868.2 M460.9 371.3L1153.3 860.3 M471.4 366.6L1164.6 852.5 M481.9 361.9L1175.9 844.7 M502.6 352.7L1198.1 829.3 M512.9 348.2L1209.1 821.7 M523.1 343.6L1220.1 814.1 M533.3 339.1L1230.9 806.6 M553.5 330.1L1252.4 791.7 M563.5 325.7L1263.0 784.4 M573.5 321.3L1273.6 777.1 M583.4 316.9L1284.1 769.8 M603.1 308.1L1304.8 755.4 M612.9 303.8L1315.1 748.3 M622.6 299.5L1325.3 741.2 M632.3 295.2L1335.4 734.2 M651.4 286.7L1355.5 720.3 M660.9 282.4L1365.4 713.4 M670.4 278.2L1375.3 706.6 M679.8 274.1L1385.1 699.8 M698.5 265.8L1404.5 686.4 M707.8 261.6L1414.2 679.7 M717.0 257.5L1423.7 673.1 M726.2 253.5L1433.2 666.5 M744.4 245.4L1452.0 653.5 M753.5 241.4L1461.3 647.0 M762.5 237.4L1470.6 640.6 M771.4 233.4L1479.8 634.3 M789.2 225.5L1498.0 621.7 M798.0 221.6L1507.0 615.4 M806.8 217.7L1515.9 609.2 M815.5 213.8L1524.8 603.0 M832.9 206.1L1542.5 590.8 M841.5 202.3L1551.2 584.8 M850.0 198.5L1559.9 578.8 M858.6 194.7L1568.5 572.8 M875.5 187.2L1585.6 560.9 M883.9 183.5L1594.1 555.1 M892.2 179.8L1602.5 549.2 M900.6 176.1L1610.9 543.4 M917.1 168.7L1627.5 532.0 M925.3 165.1L1635.7 526.3 M933.4 161.5L1643.9 520.6 M941.6 157.9L1652.0 515.0" stroke="#d8d8d8" stroke-width="0.9" fill="none"/>
<path d="M153.7 507.6L949.6 154.3 M185.0 535.4L985.3 172.1 M217.2 564.1L1021.9 190.4 M250.6 593.8L1059.6 209.2 M285.1 624.5L1098.2 228.5 M320.8 656.2L1137.9 248.4 M357.7 689.1L1178.7 268.8 M396.0 723.1L1220.7 289.8 M435.6 758.4L1263.9 311.3 M476.8 795.0L1308.3 333.6 M519.5 833.0L1354.1 356.4 M563.9 872.5L1401.3 380.0 M610.0 913.5L1449.9 404.3 M657.9 956.2L1500.0 429.3 M707.9 1000.6L1551.7 455.2 M759.9 1046.9L1605.0 481.8 M814.2 1095.2L1660.1 509.4 M153.7 507.6L814.2 1095.2 M214.2 480.8L882.3 1048.0 M273.0 454.7L947.8 1002.6 M330.1 429.3L1011.0 958.9 M385.6 404.7L1071.8 916.8 M439.7 380.7L1130.4 876.2 M492.3 357.3L1187.0 837.0 M543.4 334.6L1241.7 799.1 M593.3 312.5L1294.5 762.6 M641.9 290.9L1345.5 727.2 M689.2 269.9L1394.9 693.1 M735.3 249.4L1442.6 660.0 M780.3 229.4L1488.9 627.9 M824.2 210.0L1533.7 596.9 M867.0 191.0L1577.1 566.8 M908.8 172.4L1619.2 537.7 M949.6 154.3L1660.1 509.4" stroke="#a9a9a9" stroke-width="1.1" fill="none"/>
<path d="M851 270 L887.8 291" stroke="#7ed67e" stroke-width="1.2"/>
<path d="M851 270 L831 280" stroke="#4a5a9a" stroke-width="1"/>
<circle cx="851" cy="270" r="3" fill="#14207a"/>
<path d="M896.5 512 L1046.5 338 L1050 341 L1050.5 388 L901 566 L897 562 Z" fill="#2b2b2b"/>
<path d="M896.5 512 L1046.5 338" stroke="#444" stroke-width="1.5"/>
<path d="M1046.5 338 L1050 341 L1050.5 387 L1048 385 Z" fill="#3a3a3a"/>
<path d="M934.5 490.5 L938.5 486.5 L939 506.5 L935 509.5 Z M1026.5 379 L1030.5 375.5 L1031.2 389.5 L1027.2 392 Z" fill="#e4e4e4"/>
<path d="M905.0 556.0 L911.5 540.3 L917.9 540.6 L924.4 525.0 L930.8 525.3 L937.3 509.6 L943.7 509.9 L950.2 494.2 L956.6 494.5 L963.1 478.9 L969.5 479.2 L976.0 463.5 L982.5 463.8 L988.9 448.1 L995.4 448.5 L1001.8 432.8 L1008.3 433.1 L1014.7 417.4 L1021.2 417.7 L1027.6 402.0 L1034.1 402.4 L1040.5 386.7 L1047.0 387.0" fill="none" stroke="#a8a8a8" stroke-width="0.8"/>
<path d="M905.0 548.0 L911.5 548.3 L917.9 532.6 L924.4 533.0 L930.8 517.3 L937.3 517.6 L943.7 501.9 L950.2 502.2 L956.6 486.5 L963.1 486.9 L969.5 471.2 L976.0 471.5 L982.5 455.8 L988.9 456.1 L995.4 440.5 L1001.8 440.8 L1008.3 425.1 L1014.7 425.4 L1021.2 409.7 L1027.6 410.0 L1034.1 394.4 L1040.5 394.7 L1047.0 379.0" fill="none" stroke="#a8a8a8" stroke-width="0.8"/>
</g>
</svg>
<div class="a" style="left:1113px;top:139px;width:4px;height:536px;background:#eeeeee"></div>
<div class="a" style="left:1117px;top:139px;width:1px;height:536px;background:#e0e0e0"></div>

<!-- DBD-BIM PANEL -->
<div class="a" style="left:1118px;top:139px;width:358px;height:536px;background:#fff"></div>
<div class="t" style="left:1123px;top:145px;font-size:15px;line-height:18px;color:#3f7ab7">DBD-BIM</div>
<svg style="left:1434px;top:150px" width="40" height="10"><path d="M1.5 3 h6 l-3 3.5z" fill="#666"/><path d="M15 5 h3 M18 3 v4 M18 4 h4 v2 h-4" fill="none" stroke="#999" stroke-width="0.9"/><path d="M30.5 2 l5.5 5.5 M36 2 l-5.5 5.5" stroke="#888" stroke-width="1"/></svg>
<div class="a" style="left:1118px;top:167px;width:358px;height:26px;background:#e9e9e9"></div>
<svg style="left:1135px;top:175px" width="40" height="14">
 <rect x="1" y="2" width="12" height="2" fill="#333"/><rect x="1" y="5.5" width="12" height="2" fill="#333"/><rect x="1" y="9" width="12" height="2" fill="#333"/>
 <circle cx="27.5" cy="5" r="3.6" fill="none" stroke="#333" stroke-width="1.5"/><path d="M30 7.5 l3.5 3.5" stroke="#333" stroke-width="2"/>
</svg>
<div class="t" style="left:1330px;top:174px;font-size:9.2px;line-height:13px;color:#333">2022-10</div>
<svg style="left:1367px;top:172px" width="15" height="14"><circle cx="7" cy="4.5" r="3.3" fill="#9bc53d"/><path d="M1 13 q0 -5.5 6 -5.5 q6 0 6 5.5z" fill="#9bc53d"/></svg>
<div class="t" style="left:1387px;top:168px;font-size:19px;line-height:24px;font-weight:bold;color:#555;letter-spacing:0.3px"><span style="color:#f6bd0a">DBD</span>BIM</div>
<svg style="left:1129px;top:199px" width="13" height="13"><circle cx="6.5" cy="6.5" r="5.3" fill="#eaf3fb" stroke="#4a90d9" stroke-width="1.2"/><path d="M9.5 6.5 h-6 M6 4 l-2.5 2.5 l2.5 2.5" fill="none" stroke="#2a74c6" stroke-width="1.3"/></svg>
<div class="t" style="left:1143px;top:199px;font-size:9.6px;line-height:13px;color:#444">Außenwandkonstruktionen</div>
<div class="t" style="left:1438px;top:199px;font-size:9.6px;line-height:13px;color:#b6c2d2">V 20.0</div>
<div class="a" style="left:1118px;top:219px;width:13px;height:19px;background:#ededed"></div><div class="a" style="left:1131px;top:219px;width:340px;height:19px;background:#e6e6e6"></div>
<div class="a" style="left:1132px;top:219px;width:66px;height:19px;background:#f8c60e"></div>
<div class="t" style="left:1140px;top:222px;font-size:8.5px;line-height:13px;font-weight:bold;color:#5a4500">Konfigurator</div>
<div class="a" style="left:1307px;top:219px;width:1px;height:19px;background:#f2f2f2"></div>
<div class="a" style="left:1400px;top:219px;width:1px;height:19px;background:#f2f2f2"></div>
<div class="t" style="left:1208px;top:222px;font-size:8.2px;line-height:13px;font-weight:bold;color:#555">Leistungen + Baupreise</div>
<div class="t" style="left:1317px;top:222px;font-size:8.3px;line-height:13px;font-weight:bold;color:#555">Regeln der Technik</div>
<div class="t" style="left:1409px;top:222px;font-size:8.3px;line-height:13px;font-weight:bold;color:#555">Klassifikation</div>
<div class="a" style="left:1132px;top:243px;width:63px;height:18px;border:1px solid #e2e2e2;border-radius:2px;background:#fff"></div>
<div class="a" style="left:1198px;top:243px;width:81px;height:18px;border:1px solid #e2e2e2;border-radius:2px;background:#fff"></div>
<div class="a" style="left:1284px;top:243px;width:75px;height:18px;border:1px solid #e2e2e2;border-radius:2px;background:#fff"></div>
<svg style="left:1137px;top:246px" width="12" height="12"><path d="M5.5 0.5 l1.6 3.4 l3.7 0.4 l-2.8 2.5 l0.8 3.7 l-3.3 -1.9 l-3.3 1.9 l0.8 -3.7 l-2.8 -2.5 l3.7 -0.4z" fill="#333"/></svg>
<div class="t" style="left:1153px;top:246px;font-size:8.8px;line-height:13px;color:#555">Vorlagen</div>
<svg style="left:1204px;top:246px" width="12" height="12"><circle cx="5.5" cy="5.5" r="5" fill="#333"/><path d="M3.5 3.5 l4 4 M7.5 3.5 l-4 4" stroke="#fff" stroke-width="1.3"/></svg>
<div class="t" style="left:1220px;top:246px;font-size:8.8px;line-height:13px;color:#555">Zurücksetzen</div>
<svg style="left:1290px;top:246px" width="12" height="12"><circle cx="5.5" cy="5.5" r="5" fill="#333"/><rect x="3" y="4" width="5" height="3" fill="#ddd"/></svg>
<div class="t" style="left:1306px;top:246px;font-size:8.5px;line-height:13px;color:#555">Anregungen</div>
<svg style="left:1450px;top:246px" width="14" height="14"><g fill="#333"><circle cx="7" cy="7" r="4.6"/><path d="M5.8 0.8 h2.4 v3 h-2.4z M5.8 10.2 h2.4 v3 h-2.4z M0.8 5.8 v2.4 h3 v-2.4z M10.2 5.8 v2.4 h3 v-2.4z"/><path d="M2.1 3.8 l1.7 -1.7 l2.1 2.1 l-1.7 1.7z M8.1 9.8 l1.7 -1.7 l2.1 2.1 l-1.7 1.7z M9.8 2.1 l1.7 1.7 l-2.1 2.1 l-1.7 -1.7z M3.8 11.9 l-1.7 -1.7 l2.1 -2.1 l1.7 1.7z"/></g><circle cx="7" cy="7" r="1.8" fill="#fff"/></svg>
<div class="a" style="left:1118px;top:267px;width:358px;height:18px;background:#e4e4e4"></div>
<div class="t" style="left:1131px;top:270px;font-size:9.2px;line-height:13px;font-weight:bold;color:#333">Außenwandkonstruktion Ortbeton D 0,25 m tragend [m2]</div>

<svg style="left:1129px;top:296px" width="11" height="12"><path d="M1 2 l3 3 M4 5 l4 -3 M4 5 l1 5" stroke="#7a5" stroke-width="1.3"/><circle cx="1.5" cy="2" r="1.5" fill="#f0c030"/><circle cx="8" cy="2" r="1.5" fill="#5ab"/><circle cx="5" cy="10" r="1.6" fill="#d33"/></svg>
<div class="t" style="left:1142px;top:295px;font-size:9.5px;line-height:13px;color:#555">Außenwandkonstruktionen</div>
<svg style="left:1264px;top:297px" width="11" height="11"><circle cx="5.5" cy="5.5" r="5" fill="#999"/><path d="M3 5.5 h5 M5.5 3 v5" stroke="#f4f4f4" stroke-width="1.4"/></svg>
<svg style="left:1277px;top:297px" width="11" height="11"><path d="M5.5 0.5 l1.5 3.2 l3.5 0.4 l-2.6 2.3 l0.7 3.5 l-3.1 -1.8 l-3.1 1.8 l0.7 -3.5 l-2.6 -2.3 l3.5 -0.4z" fill="#f5c518"/></svg>
<svg style="left:1291px;top:297px" width="11" height="11"><path d="M2.2 3.2 a4 4 0 1 1 0.3 4.5" fill="none" stroke="#888" stroke-width="1"/><path d="M1 1.5 v2.5 h2.5" fill="none" stroke="#888" stroke-width="1"/><path d="M5.5 3.5 v2.5 l1.5 1" fill="none" stroke="#888" stroke-width="0.9"/></svg>
<svg style="left:1130px;top:305px" width="60" height="90"><g stroke="#cfcfcf" stroke-width="1" fill="none">
<path d="M6.5 2 V83 H13"/><path d="M6.5 17 H13"/><path d="M15.5 19 V67 H23"/><path d="M15.5 34 H23"/><path d="M25.5 36 V50 H33"/></g></svg>
<div class="a" style="left:1144px;top:320px;width:4px;height:4px;border-radius:2px;background:#999"></div>
<div class="t" style="left:1153px;top:315px;font-size:9.5px;line-height:13px;color:#555">Wandkonstruktionen Ortbeton</div>
<svg style="left:1288px;top:316px" width="11" height="11"><circle cx="5.5" cy="5.5" r="5" fill="#999"/><path d="M3 5.5 h5 M5.5 3 v5" stroke="#f4f4f4" stroke-width="1.4"/></svg>
<svg style="left:1302px;top:316px" width="11" height="11"><path d="M2.2 3.2 a4 4 0 1 1 0.3 4.5" fill="none" stroke="#888" stroke-width="1"/><path d="M1 1.5 v2.5 h2.5" fill="none" stroke="#888" stroke-width="1"/><path d="M5.5 3.5 v2.5 l1.5 1" fill="none" stroke="#888" stroke-width="0.9"/></svg>
<div class="a" style="left:1154px;top:337px;width:4px;height:4px;border-radius:2px;background:#999"></div>
<div class="t" style="left:1163px;top:332px;font-size:9.5px;line-height:13px;color:#555">Schalungen Wandkonstruktionen</div>
<svg style="left:1310px;top:333px" width="11" height="11"><circle cx="5.5" cy="5.5" r="5" fill="#999"/><path d="M3 5.5 h5 M5.5 3 v5" stroke="#f4f4f4" stroke-width="1.4"/></svg>
<svg style="left:1323px;top:333px" width="11" height="11"><circle cx="5.5" cy="5.5" r="5" fill="#999"/><path d="M3 5.5 h5" stroke="#f4f4f4" stroke-width="1.4"/></svg>
<svg style="left:1337px;top:333px" width="11" height="11"><path d="M2.2 3.2 a4 4 0 1 1 0.3 4.5" fill="none" stroke="#888" stroke-width="1"/><path d="M1 1.5 v2.5 h2.5" fill="none" stroke="#888" stroke-width="1"/><path d="M5.5 3.5 v2.5 l1.5 1" fill="none" stroke="#888" stroke-width="0.9"/></svg>
<div class="a" style="left:1164px;top:353px;width:4px;height:4px;border-radius:2px;background:#f5c518"></div>
<div class="t" style="left:1174px;top:348px;font-size:9.5px;line-height:13px;color:#555">Wand / Bauteil, aufgehend - Schalungen</div>
<svg style="left:1347px;top:349px" width="11" height="11"><path d="M2.2 3.2 a4 4 0 1 1 0.3 4.5" fill="none" stroke="#888" stroke-width="1"/><path d="M1 1.5 v2.5 h2.5" fill="none" stroke="#888" stroke-width="1"/><path d="M5.5 3.5 v2.5 l1.5 1" fill="none" stroke="#888" stroke-width="0.9"/></svg>
<div class="a" style="left:1154px;top:370px;width:4px;height:4px;border-radius:2px;background:#f5c518"></div>
<div class="t" style="left:1163px;top:365px;font-size:9.5px;line-height:13px;color:#555">Wände / aufgehende Bauteile - Ortbeton</div>
<svg style="left:1339px;top:366px" width="11" height="11"><path d="M2.2 3.2 a4 4 0 1 1 0.3 4.5" fill="none" stroke="#888" stroke-width="1"/><path d="M1 1.5 v2.5 h2.5" fill="none" stroke="#888" stroke-width="1"/><path d="M5.5 3.5 v2.5 l1.5 1" fill="none" stroke="#888" stroke-width="0.9"/></svg>
<div class="a" style="left:1144px;top:386px;width:4px;height:4px;border-radius:2px;background:#999"></div>
<div class="t" style="left:1153px;top:381px;font-size:9.5px;line-height:13px;color:#555">Freie Klassifikation</div>
<svg style="left:1238px;top:382px" width="11" height="11"><circle cx="5.5" cy="5.5" r="5" fill="#999"/><path d="M3 5.5 h5" stroke="#f4f4f4" stroke-width="1.4"/></svg>
<svg style="left:1252px;top:382px" width="11" height="11"><path d="M2.2 3.2 a4 4 0 1 1 0.3 4.5" fill="none" stroke="#888" stroke-width="1"/><path d="M1 1.5 v2.5 h2.5" fill="none" stroke="#888" stroke-width="1"/><path d="M5.5 3.5 v2.5 l1.5 1" fill="none" stroke="#888" stroke-width="0.9"/></svg>
<div class="a" style="left:1118px;top:503px;width:358px;height:2px;background:#cdcdcd"></div>
<div class="a" style="left:1118px;top:505px;width:358px;height:16px;background:#e6e6e6"></div>
<div class="t" style="left:1130px;top:506px;font-size:9.3px;line-height:13px;font-weight:bold;color:#333">Außenwandkonstruktionen</div>
<div class="a" style="left:1118px;top:540px;width:358px;height:18px;background:#f3f3f3"></div>
<div class="a" style="left:1118px;top:577px;width:358px;height:19px;background:#f3f3f3"></div>

<div class="t" style="left:1130px;top:523px;font-size:9.7px;line-height:13px;color:#555">Bauteil</div>
<div class="t" style="left:1281px;top:523px;font-size:9.7px;line-height:13px;color:#3d6fb6">Außenwandkonstruktion</div>
<svg style="left:1453px;top:525px" width="11" height="11"><circle cx="5.5" cy="5.5" r="5" fill="#666"/><path d="M3.5 3.5 l4 4 M7.5 3.5 l-4 4" stroke="#f2f2f2" stroke-width="1.3"/></svg>
<div class="t" style="left:1130px;top:542px;font-size:9.7px;line-height:13px;color:#555">Bauweise / Baustoff Konstr...</div>
<div class="t" style="left:1281px;top:542px;font-size:9.7px;line-height:13px;color:#3d6fb6">Ortbeton</div>
<svg style="left:1453px;top:544px" width="11" height="11"><circle cx="5.5" cy="5.5" r="5" fill="#666"/><path d="M3.5 3.5 l4 4 M7.5 3.5 l-4 4" stroke="#f2f2f2" stroke-width="1.3"/></svg>
<div class="t" style="left:1130px;top:561px;font-size:9.7px;line-height:13px;color:#555">Dicke Wandkonstruktion</div>
<svg style="left:1453px;top:563px" width="11" height="11"><circle cx="5.5" cy="5.5" r="5" fill="#666"/><path d="M3.5 3.5 l4 4 M7.5 3.5 l-4 4" stroke="#f2f2f2" stroke-width="1.3"/></svg>
<div class="t" style="left:1130px;top:580px;font-size:9.7px;line-height:13px;color:#555">Tragverhalten Wand</div>
<div class="t" style="left:1281px;top:580px;font-size:9.7px;line-height:13px;color:#3d6fb6">tragend</div>
<svg style="left:1453px;top:582px" width="11" height="11"><circle cx="5.5" cy="5.5" r="5" fill="#666"/><path d="M3.5 3.5 l4 4 M7.5 3.5 l-4 4" stroke="#f2f2f2" stroke-width="1.3"/></svg>
<div class="a" style="left:1281px;top:559px;width:78px;height:17px;border:1px solid #e0e0e0;background:#fff"></div>
<div class="t r" style="left:1290px;top:561px;width:43px;font-size:9.7px;line-height:13px;color:#555">0,250</div>
<svg style="left:1344px;top:562px" width="12" height="12"><path d="M2 5 a4 4 0 0 1 7.5 -1.5 M10 7 a4 4 0 0 1 -7.5 1.5" fill="none" stroke="#bbb" stroke-width="1.1"/><path d="M9.5 1.5 v2.5 h-2.5 M2.5 10.5 v-2.5 h2.5" fill="none" stroke="#bbb" stroke-width="1"/></svg>
<div class="t" style="left:1365px;top:561px;font-size:9.7px;line-height:13px;color:#555">m</div>

<!-- RIGHT TABS -->
<div class="a" style="left:1476px;top:139px;width:1px;height:536px;background:#d4d4d4"></div>
<div class="a" style="left:1477px;top:139px;width:23px;height:536px;background:#fdfdfd"></div>
<div class="a" style="left:1495px;top:146px;width:5px;height:69px;background:#e0e0e0"></div>
<div class="a" style="left:1495px;top:225px;width:5px;height:44px;background:#dde3ea"></div>
<div class="a" style="left:1495px;top:277px;width:5px;height:50px;background:#e0e0e0"></div>
<div class="a" style="left:1495px;top:331px;width:5px;height:71px;background:#e0e0e0"></div>
<div class="t" style="left:1479px;top:147px;font-size:9.4px;line-height:12px;color:#555;writing-mode:vertical-rl">Eigenschaften</div>
<div class="t" style="left:1479px;top:226px;font-size:9.4px;line-height:12px;color:#3b78c0;writing-mode:vertical-rl">DBD-BIM</div>
<div class="t" style="left:1479px;top:283px;font-size:9.4px;line-height:12px;color:#555;writing-mode:vertical-rl">STLB-Bau</div>
<div class="t" style="left:1479px;top:341px;font-size:9.4px;line-height:12px;color:#555;writing-mode:vertical-rl">Kopierfenster</div>
<div class="a" style="left:1500px;top:0;width:12px;height:675px;background:#fff"></div>
<!-- yellow annotation -->
<svg style="left:0;top:0;mix-blend-mode:multiply" width="1512" height="675"><path d="M1495 218 C1494.5 210 1495 204 1499 200 C1480 199.5 1462 207 1451 222 C1441 236 1439 256 1441 274 C1443 292 1452 308 1466 311 C1480 313 1493 300 1500 282" fill="none" stroke="#f0e200" stroke-width="7.5" stroke-linecap="butt" stroke-linejoin="round"/><rect x="1490" y="204" width="10" height="15" fill="#f0e200"/></svg>

</body></html>
